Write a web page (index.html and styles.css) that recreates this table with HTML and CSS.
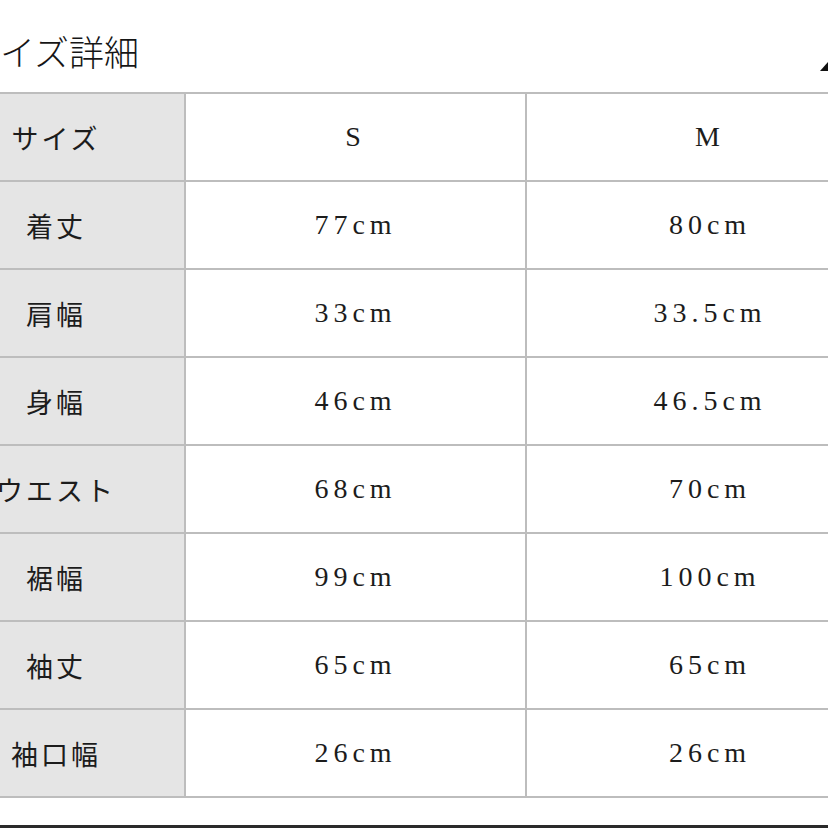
FILE: index.html
```html
<!DOCTYPE html>
<html lang="ja">
<head>
<meta charset="utf-8">
<link rel="stylesheet" href="styles.css">
</head>
<body>
<div class="page">
  <div class="header">
    <h1 class="title">サイズ詳細</h1>
    <svg class="toggle" width="16" height="9" viewBox="0 0 16 9"><polygon points="0,9 8,0 16,9" fill="#111"/></svg>
  </div>
  <div class="table">
    <div class="cell label">サイズ</div><div class="cell val">S</div><div class="cell val">M</div>
    <div class="cell label">着丈</div><div class="cell val">77cm</div><div class="cell val">80cm</div>
    <div class="cell label">肩幅</div><div class="cell val">33cm</div><div class="cell val">33.5cm</div>
    <div class="cell label">身幅</div><div class="cell val">46cm</div><div class="cell val">46.5cm</div>
    <div class="cell label">ウエスト</div><div class="cell val">68cm</div><div class="cell val">70cm</div>
    <div class="cell label">裾幅</div><div class="cell val">99cm</div><div class="cell val">100cm</div>
    <div class="cell label">袖丈</div><div class="cell val">65cm</div><div class="cell val">65cm</div>
    <div class="cell label">袖口幅</div><div class="cell val">26cm</div><div class="cell val">26cm</div>
  </div>
  <div class="footer-line"></div>
</div>
</body>
</html>
```
FILE: styles.css
```css
html, body {
  margin: 0;
  padding: 0;
  overflow: hidden;
  background: #ffffff;
}
.page {
  width: 828px;
  height: 828px;
  overflow: hidden;
  color: #1e1e1e;
}
.header {
  height: 92px;
  box-sizing: border-box;
  padding-top: 31px;
  display: flex;
  align-items: flex-start;
}
.title {
  margin: 0 0 0 -35px;
  font-family: "Noto Sans CJK JP", sans-serif;
  font-weight: 300;
  font-size: 35px;
  line-height: 40px;
  color: #161616;
}
.toggle {
  margin-left: auto;
  margin-right: -8px;
  margin-top: 31px;
  flex: none;
}
.table {
  margin-left: -74px;
  width: 969px;
  display: grid;
  grid-template-columns: 256px 339px 366px;
  grid-auto-rows: 86px;
  gap: 2px;
  padding: 2px;
  background: #bdbdbd;
}
.cell {
  display: flex;
  align-items: center;
  justify-content: center;
  background: #ffffff;
}
.label {
  background: #e5e5e5;
  font-family: "Noto Sans CJK JP", sans-serif;
  font-weight: 400;
  font-size: 27px;
  letter-spacing: 3px;
  color: #1c1c1c;
}
.val {
  font-family: "Liberation Serif", serif;
  font-size: 28px;
  letter-spacing: 5px;
  color: #1c1c1c;
}
.footer-line {
  margin-top: 27px;
  height: 3px;
  background: #2a2a2a;
}
```
